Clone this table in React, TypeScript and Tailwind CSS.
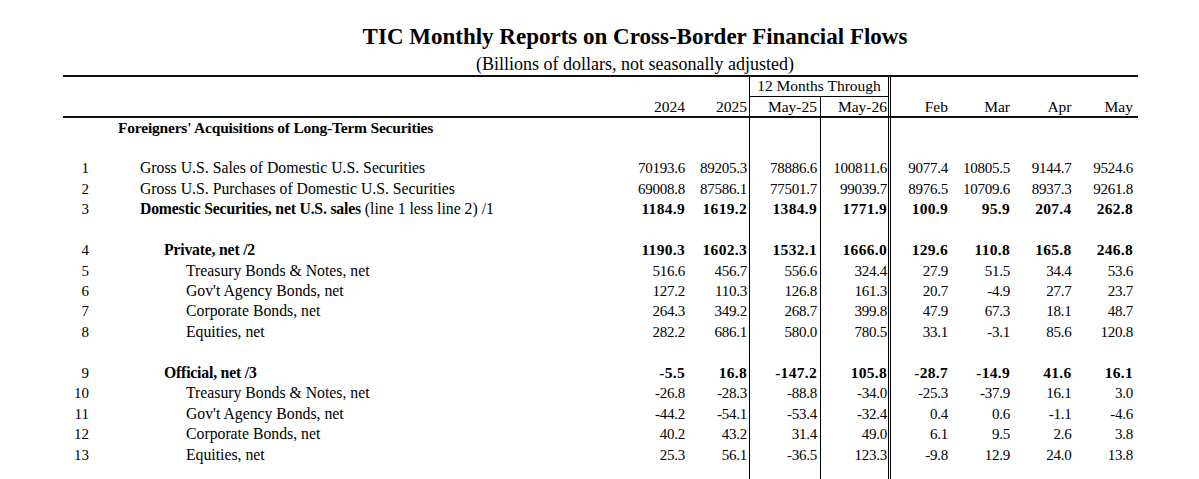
type Row = {
  n?: number;
  label?: string;
  note?: string;
  level?: number;
  bold?: boolean;
  vals?: string[];
};

const rows: Row[] = [
  { n: 1, label: "Gross U.S. Sales of Domestic U.S. Securities", level: 0, vals: ["70193.6", "89205.3", "78886.6", "100811.6", "9077.4", "10805.5", "9144.7", "9524.6"] },
  { n: 2, label: "Gross U.S. Purchases of Domestic U.S. Securities", level: 0, vals: ["69008.8", "87586.1", "77501.7", "99039.7", "8976.5", "10709.6", "8937.3", "9261.8"] },
  { n: 3, label: "Domestic Securities, net U.S. sales", note: " (line 1 less line 2) /1", level: 0, bold: true, vals: ["1184.9", "1619.2", "1384.9", "1771.9", "100.9", "95.9", "207.4", "262.8"] },
  {},
  { n: 4, label: "Private, net /2", level: 1, bold: true, vals: ["1190.3", "1602.3", "1532.1", "1666.0", "129.6", "110.8", "165.8", "246.8"] },
  { n: 5, label: "Treasury Bonds & Notes, net", level: 2, vals: ["516.6", "456.7", "556.6", "324.4", "27.9", "51.5", "34.4", "53.6"] },
  { n: 6, label: "Gov't Agency Bonds, net", level: 2, vals: ["127.2", "110.3", "126.8", "161.3", "20.7", "-4.9", "27.7", "23.7"] },
  { n: 7, label: "Corporate Bonds, net", level: 2, vals: ["264.3", "349.2", "268.7", "399.8", "47.9", "67.3", "18.1", "48.7"] },
  { n: 8, label: "Equities, net", level: 2, vals: ["282.2", "686.1", "580.0", "780.5", "33.1", "-3.1", "85.6", "120.8"] },
  {},
  { n: 9, label: "Official, net /3", level: 1, bold: true, vals: ["-5.5", "16.8", "-147.2", "105.8", "-28.7", "-14.9", "41.6", "16.1"] },
  { n: 10, label: "Treasury Bonds & Notes, net", level: 2, vals: ["-26.8", "-28.3", "-88.8", "-34.0", "-25.3", "-37.9", "16.1", "3.0"] },
  { n: 11, label: "Gov't Agency Bonds, net", level: 2, vals: ["-44.2", "-54.1", "-53.4", "-32.4", "0.4", "0.6", "-1.1", "-4.6"] },
  { n: 12, label: "Corporate Bonds, net", level: 2, vals: ["40.2", "43.2", "31.4", "49.0", "6.1", "9.5", "2.6", "3.8"] },
  { n: 13, label: "Equities, net", level: 2, vals: ["25.3", "56.1", "-36.5", "123.3", "-9.8", "12.9", "24.0", "13.8"] },
];

// column cells after the label, in order; widths add up to the table's 1075px
const cols = [
  "w-[60px] text-right",
  "w-[64px] pr-[2px] text-right",
  "w-[71px] pr-[3px] text-right border-l border-black",
  "w-[68px] pr-[1px] text-right border-l border-black",
  "w-[60px] text-right border-l-[3px] border-double border-black",
  "w-[62px] text-right",
  "w-[61.5px] text-right",
  "w-[61.5px] text-right",
];

const indent = ["pl-[51px]", "pl-[75px]", "pl-[97px]"];

function DataRow({ row }: { row: Row }) {
  const vals = row.vals ?? ["", "", "", "", "", "", "", ""];
  return (
    <div className="flex h-[20.45px] items-center leading-[20.45px]">
      <div className="w-[26px] text-right text-[15px]">{row.n}</div>
      <div className={`w-[536px] whitespace-nowrap text-[15.75px] ${indent[row.level ?? 0]}`}>
        {row.label && (
          <>
            <span className={row.bold ? "font-bold tracking-[-0.2px]" : ""}>{row.label}</span>
            {row.note && <span>{row.note}</span>}
          </>
        )}
      </div>
      {vals.map((v, i) => (
        <div
          key={i}
          className={`h-full ${cols[i]} ${row.bold ? "font-bold text-[15.5px] tracking-[0.3px]" : "text-[15px] tracking-[-0.25px]"}`}
        >
          {v}
        </div>
      ))}
    </div>
  );
}

export default function App() {
  return (
    <div className="w-[1199px] h-[479px] overflow-hidden bg-white text-black font-['Liberation_Serif','Times_New_Roman',serif]">
      <div className="pt-[23px] pl-[71px] text-center text-[23px] leading-[28px] font-bold">
        TIC Monthly Reports on Cross-Border Financial Flows
      </div>
      <div className="mt-[2px] pl-[71px] text-center text-[18px] leading-[22px]">
        (Billions of dollars, not seasonally adjusted)
      </div>

      <div className="ml-[63px] w-[1075px]">
        {/* header block */}
        <div className="border-t-2 border-b-2 border-[#111]">
          <div className="flex h-[19.5px]">
            <div className="w-[686px]" />
            <div className="w-[139px] border-l border-b border-black text-center text-[15.5px] leading-[18px] whitespace-nowrap">
              12 Months Through
            </div>
            <div className="w-[60px] border-l-[3px] border-double border-black" />
          </div>
          <div className="flex h-[19px] items-end leading-[19px] text-[15.5px]">
            <div className="w-[562px]" />
            {["2024", "2025", "May-25", "May-26", "Feb", "Mar", "Apr", "May"].map((h, i) => (
              <div key={h} className={`h-full ${cols[i]}`}>
                {h}
              </div>
            ))}
          </div>
        </div>

        <div className="flex h-[20.45px] items-center leading-[20.45px]">
          <div className="w-[562px] pl-[55px] font-bold text-[15.5px] tracking-[-0.2px] whitespace-nowrap">
            Foreigners' Acquisitions of Long-Term Securities
          </div>
          {cols.map((c, i) => (
            <div key={i} className={`h-full ${c}`} />
          ))}
        </div>
        <DataRow row={{}} />
        {rows.map((r, i) => (
          <DataRow key={i} row={r} />
        ))}
        <DataRow row={{}} />
      </div>
    </div>
  );
}
